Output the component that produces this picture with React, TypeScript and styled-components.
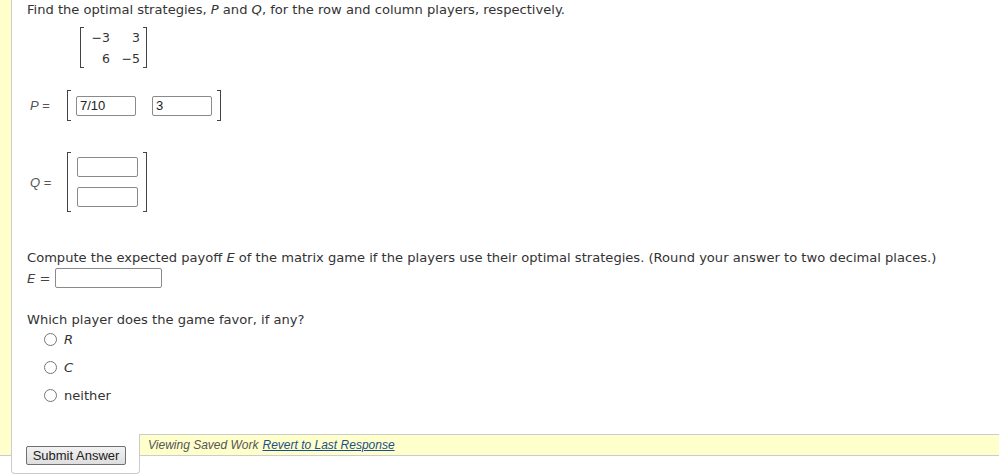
import React from "react";
import styled, { createGlobalStyle } from "styled-components";

const Global = createGlobalStyle`
  html, body { margin: 0; padding: 0; background: #fff; }
  body { font-family: "DejaVu Sans", Verdana, sans-serif; color: #333; }
`;

const Shell = styled.div`
  display: flex;
  align-items: flex-start;
  width: 999px;
  height: 474px;
  overflow: hidden;
`;

const Strip = styled.div`
  flex: none;
  width: 11px;
  height: 456px;
  box-sizing: border-box;
  background: #ffffcc;
  border-bottom: 1px solid #cccccc;
`;

const Main = styled.div`
  flex: 1;
  height: 474px;
  display: flex;
  flex-direction: column;
`;

const Content = styled.div`
  flex: 1;
  border-left: 1px solid #cccccc;
  padding-left: 15px;
  font-size: 13.08px;
`;

const Para = styled.div<{ $mt?: number }>`
  line-height: 20px;
  margin-top: ${(p) => p.$mt ?? 0}px;
  white-space: nowrap;
`;

const Var = styled.i`
  font-style: italic;
`;

const Bracketed = styled.div<{ $ml: number; $mt: number; $h: number }>`
  display: flex;
  align-items: stretch;
  margin-left: ${(p) => p.$ml}px;
  margin-top: ${(p) => p.$mt}px;
  height: ${(p) => p.$h}px;
`;

const Brack = styled.span<{ $side: "l" | "r" }>`
  flex: none;
  width: 3px;
  border: 1px solid #444;
  ${(p) => (p.$side === "l" ? "border-right: none;" : "border-left: none;")}
`;

const MatrixGrid = styled.div`
  display: grid;
  grid-template-columns: 24px 26px;
  grid-auto-rows: 21px;
  column-gap: 4px;
  padding: 0 3px 0 2px;
  align-content: center;
  font-size: 12.5px;
  line-height: 21px;
  text-align: right;
`;

const AnswerRow = styled.div<{ $mt: number }>`
  display: flex;
  align-items: center;
  margin-top: ${(p) => p.$mt}px;
`;

const EqLabel = styled.span<{ $w: number; $pl: number }>`
  flex: none;
  width: ${(p) => p.$w}px;
  padding-left: ${(p) => p.$pl}px;
  box-sizing: border-box;
  font-family: "Liberation Sans", Arial, sans-serif;
  font-size: 13px;
  color: #555;
  white-space: nowrap;
`;

const VecRow = styled.div<{ $gap: number }>`
  display: flex;
  align-items: center;
  gap: ${(p) => p.$gap}px;
  padding: 0 5px;
`;

const VecCol = styled.div`
  display: flex;
  flex-direction: column;
  justify-content: center;
  gap: 10px;
  padding: 0 5px 0 6px;
`;

const Field = styled.input<{ $w: number }>`
  width: ${(p) => p.$w}px;
  height: 20px;
  box-sizing: border-box;
  margin: 0;
  padding: 0 3px;
  border: 1px solid #8a8a8a;
  border-radius: 2px;
  font-family: "Liberation Sans", Arial, sans-serif;
  font-size: 13px;
  color: #222;
  background: #fff;
  outline: none;
`;

const ELabel = styled.span`
  width: 28px;
  flex: none;
  white-space: nowrap;
  color: #444;
`;

const Radios = styled.div`
  display: flex;
  flex-direction: column;
  gap: 10px;
  padding-left: 17px;
`;

const RadioRow = styled.label`
  display: flex;
  align-items: center;
  height: 18px;
  gap: 7px;
`;

const Radio = styled.span`
  width: 13px;
  height: 13px;
  box-sizing: border-box;
  border: 1px solid #767676;
  border-radius: 50%;
  background: #fff;
`;

const Footer = styled.div`
  flex: none;
  height: 40px;
  display: flex;
  align-items: flex-start;
`;

const Tab = styled.div`
  flex: none;
  width: 129px;
  height: 40px;
  box-sizing: border-box;
  border: 1px solid #cccccc;
  border-top: none;
  border-radius: 0 0 4px 4px;
  padding: 11px 0 0 14px;
`;

const SubmitButton = styled.button`
  height: 19px;
  width: 100px;
  box-sizing: border-box;
  margin: 0;
  padding: 0;
  border: 1px solid #707070;
  border-radius: 2px;
  background: linear-gradient(#f2f2f2, #dedede);
  font-family: "Liberation Sans", Arial, sans-serif;
  font-size: 13px;
  color: #222;
  line-height: 17px;
`;

const Bar = styled.div`
  flex: 1;
  height: 22px;
  box-sizing: border-box;
  background: #ffffcc;
  border-top: 1px solid #cccccc;
  border-bottom: 1px solid #cccccc;
  display: flex;
  align-items: center;
  padding-left: 8px;
  font-family: "Liberation Sans", Arial, sans-serif;
  font-style: italic;
  font-size: 12px;
  color: #555;
  white-space: nowrap;
`;

const Link = styled.a`
  color: #1a4f8a;
  text-decoration: underline;
  margin-left: 4px;
`;

export default function App() {
  return (
    <>
      <Global />
      <Shell>
        <Strip />
        <Main>
          <Content>
            <Para>
              Find the optimal strategies, <Var>P</Var> and <Var>Q</Var>, for the row and column players,
              respectively.
            </Para>
            <Bracketed $ml={53} $mt={7} $h={41}>
              <Brack $side="l" />
              <MatrixGrid>
                <span>−3</span>
                <span>3</span>
                <span>6</span>
                <span>−5</span>
              </MatrixGrid>
              <Brack $side="r" />
            </Bracketed>

            <AnswerRow $mt={22}>
              <EqLabel $w={40} $pl={3}>
                <Var>P</Var> =
              </EqLabel>
              <Bracketed $ml={0} $mt={0} $h={31}>
                <Brack $side="l" />
                <VecRow $gap={16}>
                  <Field $w={60} defaultValue="7/10" />
                  <Field $w={60} defaultValue="3" />
                </VecRow>
                <Brack $side="r" />
              </Bracketed>
            </AnswerRow>

            <AnswerRow $mt={31}>
              <EqLabel $w={40} $pl={3}>
                <Var>Q</Var> =
              </EqLabel>
              <Bracketed $ml={0} $mt={0} $h={60}>
                <Brack $side="l" />
                <VecCol>
                  <Field $w={61} defaultValue="" />
                  <Field $w={61} defaultValue="" />
                </VecCol>
                <Brack $side="r" />
              </Bracketed>
            </AnswerRow>

            <Para $mt={36}>
              Compute the expected payoff <Var>E</Var> of the matrix game if the players use their optimal
              strategies. (Round your answer to two decimal places.)
            </Para>
            <AnswerRow $mt={0}>
              <ELabel>
                <Var>E</Var> =
              </ELabel>
              <Field $w={107} defaultValue="" />
            </AnswerRow>

            <Para $mt={22}>Which player does the game favor, if any?</Para>
            <Radios>
              <RadioRow>
                <Radio />
                <Var>R</Var>
              </RadioRow>
              <RadioRow>
                <Radio />
                <Var>C</Var>
              </RadioRow>
              <RadioRow>
                <Radio />
                <span>neither</span>
              </RadioRow>
            </Radios>
          </Content>
          <Footer>
            <Tab>
              <SubmitButton>Submit Answer</SubmitButton>
            </Tab>
            <Bar>
              Viewing Saved Work<Link href="#">Revert to Last Response</Link>
            </Bar>
          </Footer>
        </Main>
      </Shell>
    </>
  );
}
